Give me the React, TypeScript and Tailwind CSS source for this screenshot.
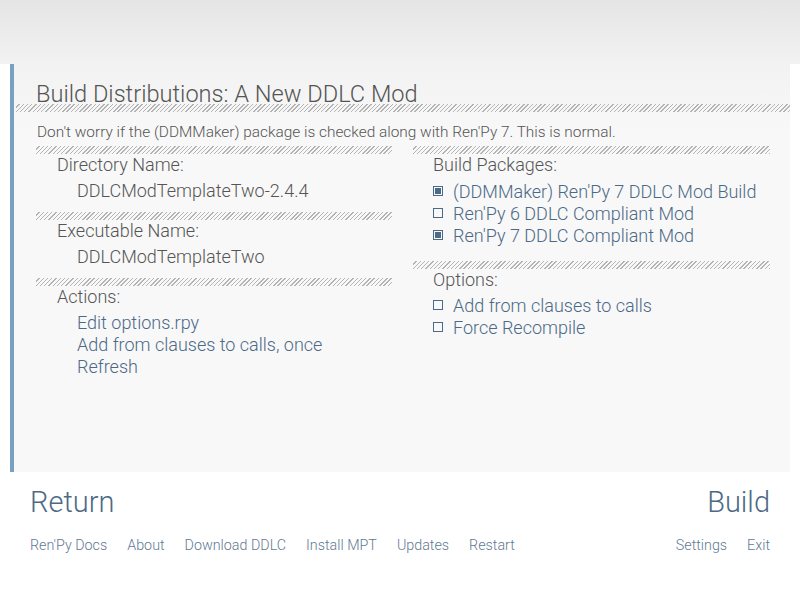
import React from "react";

const hatch =
  "h-[8px] bg-[repeating-linear-gradient(135deg,transparent_0px,transparent_2px,#b4b4b4_2px,#b4b4b4_3px)]";

function Check({ on }: { on: boolean }) {
  return (
    <span className="w-[10px] h-[10px] border border-[#4a6a88] flex items-center justify-center shrink-0">
      {on && <span className="w-[6px] h-[6px] bg-[#4a6a88]" />}
    </span>
  );
}

function CheckRow({ on, text }: { on: boolean; text: string }) {
  return (
    <div className="flex items-center h-[22px] gap-[10px] text-[18px] text-[#4b6987]">
      <Check on={on} />
      <span>{text}</span>
    </div>
  );
}

export default function App() {
  return (
    <div className="w-[800px] h-[600px] bg-white font-['Roboto',sans-serif] font-light flex flex-col overflow-hidden">
      <div className="h-[64px] shrink-0 bg-[linear-gradient(to_bottom,#e5e5e5,#f2f2f2)]" />
      <div className="mx-[10px] h-[408px] shrink-0 border-l-[4px] border-[#78a0c0] bg-[linear-gradient(to_bottom,#f2f2f2,#f8f8f8_70px)] flex flex-col">
        <div className="pl-[22px] pt-[16px] h-[40px] text-[23.6px] leading-[28px] text-[#545454]">
          Build Distributions: A New DDLC Mod
        </div>
        <div className={`${hatch} ml-[2px]`} />
        <div className="pl-[23px] pt-[10px] text-[15.4px] leading-[20px] text-[#555]">
          Don't worry if the (DDMMaker) package is checked along with Ren'Py 7. This is normal.
        </div>
        <div className="flex pl-[22px] pt-[4px] gap-[21px]">
          <div className="w-[356px] flex flex-col">
            <div className={hatch} />
            <div className="pl-[21px] text-[18px] leading-[22px] text-[#555]">Directory Name:</div>
            <div className="pl-[41px] pt-[4px] text-[18px] leading-[22px] text-[#555]">DDLCModTemplateTwo-2.4.4</div>
            <div className={`${hatch} mt-[10px]`} />
            <div className="pl-[21px] text-[18px] leading-[22px] text-[#555]">Executable Name:</div>
            <div className="pl-[41px] pt-[4px] text-[18px] leading-[22px] text-[#555]">DDLCModTemplateTwo</div>
            <div className={`${hatch} mt-[10px]`} />
            <div className="pl-[21px] text-[18px] leading-[22px] text-[#555]">Actions:</div>
            <div className="pl-[41px] pt-[4px] flex flex-col text-[18px] leading-[22px] text-[#4b6987]">
              <span>Edit options.rpy</span>
              <span>Add from clauses to calls, once</span>
              <span>Refresh</span>
            </div>
          </div>
          <div className="w-[357px] flex flex-col">
            <div className={hatch} />
            <div className="pl-[20px] text-[18px] leading-[22px] text-[#555]">Build Packages:</div>
            <div className="pl-[20px] pt-[4px] flex flex-col">
              <CheckRow on={true} text="(DDMMaker) Ren'Py 7 DDLC Mod Build" />
              <CheckRow on={false} text="Ren'Py 6 DDLC Compliant Mod" />
              <CheckRow on={true} text="Ren'Py 7 DDLC Compliant Mod" />
            </div>
            <div className={`${hatch} mt-[15px]`} />
            <div className="pl-[20px] text-[18px] leading-[22px] text-[#555]">Options:</div>
            <div className="pl-[20px] pt-[3px] flex flex-col">
              <CheckRow on={false} text="Add from clauses to calls" />
              <CheckRow on={false} text="Force Recompile" />
            </div>
          </div>
        </div>
      </div>
      <div className="px-[30px] pt-[12px] flex justify-between items-center text-[29px] leading-[36px] text-[#4d6a85]">
        <span>Return</span>
        <span>Build</span>
      </div>
      <div className="px-[30px] pt-[15px] flex justify-between text-[14.3px] leading-[20px] text-[#5f7a92]">
        <div className="flex gap-[20px]">
          <span>Ren'Py Docs</span>
          <span>About</span>
          <span>Download DDLC</span>
          <span>Install MPT</span>
          <span>Updates</span>
          <span>Restart</span>
        </div>
        <div className="flex gap-[20px]">
          <span>Settings</span>
          <span>Exit</span>
        </div>
      </div>
    </div>
  );
}
